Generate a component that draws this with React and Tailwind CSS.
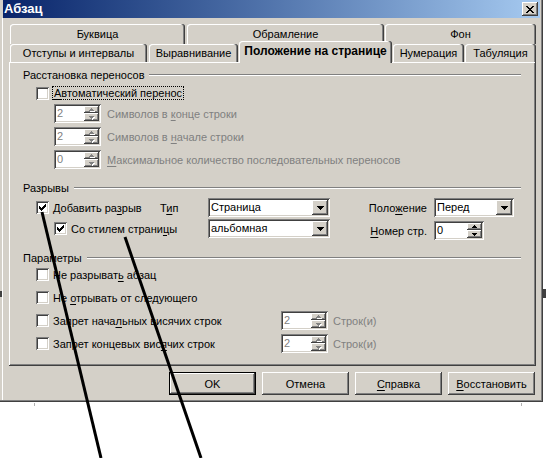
import React from "react";

const raised = "shadow-[inset_-1px_-1px_0_#404040,inset_1px_1px_0_#ffffff,inset_-2px_-2px_0_#808080]";
const sunken = "shadow-[inset_1px_1px_0_#808080,inset_-1px_-1px_0_#ffffff,inset_2px_2px_0_#404040,inset_-2px_-2px_0_#d4d0c8]";
const tabSh = "shadow-[inset_-1px_0_0_#404040,inset_-2px_0_0_#808080,inset_1px_1px_0_#ffffff]";

function U({ children }) {
  return <span className="underline underline-offset-[2px] decoration-1">{children}</span>;
}

function Pixels({ rows, color, w, h, className = "" }) {
  return (
    <svg width={w} height={h} shapeRendering="crispEdges" className={className}>
      {rows.map(([y, x, ww], i) => (
        <rect key={i} x={x} y={y} width={ww} height={1} fill={color} />
      ))}
    </svg>
  );
}

const checkRows = [
  [3, 9, 1],
  [4, 8, 2],
  [5, 3, 1], [5, 7, 3],
  [6, 3, 2], [6, 6, 3],
  [7, 3, 5],
  [8, 4, 3],
  [9, 5, 1],
];

function Check({ checked }) {
  return (
    <span className={`relative inline-block w-[13px] h-[13px] shrink-0 bg-white ${sunken}`}>
      {checked && <Pixels rows={checkRows} color="#000" w={13} h={13} className="absolute left-0 top-0" />}
    </span>
  );
}

const upRows = [[0, 2, 1], [1, 1, 3], [2, 0, 5]];
const downRows = [[0, 0, 5], [1, 1, 3], [2, 2, 1]];

function SpinBtn({ rows, disabled, h }) {
  return (
    <span className={`flex items-center justify-center bg-[#d4d0c8] ${raised} ${h}`}>
      <span className="relative w-[5px] h-[3px]">
        {disabled && <Pixels rows={rows} color="#ffffff" w={5} h={3} className="absolute left-[1px] top-[1px]" />}
        <Pixels rows={rows} color={disabled ? "#808080" : "#000000"} w={5} h={3} className="absolute left-0 top-0" />
      </span>
    </span>
  );
}

function Spin({ value, disabled, w }) {
  return (
    <div className={`flex h-[19px] shrink-0 bg-white p-[2px] ${sunken} ${w}`}>
      <span className={`flex-1 pl-[1px] leading-[15px] ${disabled ? "text-[#808080]" : "text-black"}`}>{value}</span>
      <span className="flex flex-col w-[15px]">
        <SpinBtn rows={upRows} disabled={disabled} h="h-[7px]" />
        <SpinBtn rows={downRows} disabled={disabled} h="h-[8px]" />
      </span>
    </div>
  );
}

const arrowRows = [[0, 0, 7], [1, 1, 5], [2, 2, 3], [3, 3, 1]];

function Combo({ value, w }) {
  return (
    <div className={`flex h-[19px] shrink-0 bg-white p-[2px] ${sunken} ${w}`}>
      <span className="flex-1 pl-[1px] leading-[15px] text-black">{value}</span>
      <span className={`flex items-center justify-center w-[16px] h-[15px] bg-[#d4d0c8] ${raised}`}>
        <Pixels rows={arrowRows} color="#000" w={7} h={4} />
      </span>
    </div>
  );
}

function Group({ label, className = "" }) {
  return (
    <div className={`flex items-center h-[14px] ${className}`}>
      <span className="whitespace-nowrap">{label}</span>
      <div className="flex-1 ml-[5px] h-[2px] border-t border-b border-t-[#808080] border-b-white" />
    </div>
  );
}

function Tab({ children, w, selected }) {
  return (
    <div
      className={`flex items-center justify-center rounded-t-[3px] bg-[#d4d0c8] whitespace-nowrap ${tabSh} ${w} ${
        selected ? "h-[22px] mb-[-1px] relative z-10 font-bold text-[12px] pb-[2px]" : "h-full"
      }`}
    >
      {children}
    </div>
  );
}

function Button({ children, def }) {
  return (
    <div
      className={`flex items-center justify-center w-[87px] h-[23px] bg-[#d4d0c8] ${
        def
          ? "shadow-[inset_0_0_0_1px_#000000,inset_-2px_-2px_0_#404040,inset_2px_2px_0_#ffffff,inset_-3px_-3px_0_#808080]"
          : raised
      }`}
    >
      {children}
    </div>
  );
}

const closeRows = [
  [0, 0, 2], [0, 6, 2],
  [1, 1, 2], [1, 5, 2],
  [2, 2, 4],
  [3, 3, 2],
  [4, 2, 4],
  [5, 1, 2], [5, 5, 2],
  [6, 0, 2], [6, 6, 2],
];

export default function App() {
  return (
    <div className="relative w-[546px] h-[458px] bg-white overflow-hidden text-[11px] leading-[14px] text-black whitespace-nowrap font-['Liberation_Sans',Arial,sans-serif]">
      {/* dialog window */}
      <div className="w-[543px] h-[402px] bg-[#d4d0c8] border-r border-b border-[#404040]">
        <div className="h-full border-r border-b border-[#808080] flex flex-col">
          {/* title bar */}
          <div className="ml-[3px] w-[537px] h-[18px] shrink-0 flex items-center justify-between pl-[1px] pr-[2px] bg-linear-to-r from-[#0a246a] to-[#a6caf0]">
            <span className="text-white font-bold text-[13px] leading-[16px]">Абзац</span>
            <span className={`flex items-center justify-center w-[16px] h-[14px] bg-[#d4d0c8] ${raised}`}>
              <Pixels rows={closeRows} color="#000" w={8} h={7} />
            </span>
          </div>

          <div className="flex-1 ml-[2px] border-l border-white pl-[6px] flex flex-col">
            {/* tab rows */}
            <div className="mt-[6px] h-[20px] pl-[1px] flex">
              <Tab w="w-[175px]">Буквица</Tab>
              <div className="w-[2px]" />
              <Tab w="w-[197px]">Обрамление</Tab>
              <div className="w-[1px]" />
              <Tab w="w-[151px]">Фон</Tab>
            </div>
            <div className="h-[18px] pl-[1px] flex items-end">
              <Tab w="w-[137px]">Отступы и интервалы</Tab>
              <div className="w-[2px]" />
              <Tab w="w-[89px]">Выравнивание</Tab>
              <div className="w-[1px]" />
              <Tab w="w-[153px]" selected>
                Положение на странице
              </Tab>
              <div className="w-[1px]" />
              <Tab w="w-[71px]">Нумерация</Tab>
              <div className="w-[1px]" />
              <Tab w="w-[71px]">Табуляция</Tab>
            </div>

            {/* panel */}
            <div className={`w-[527px] h-[304px] shrink-0 bg-[#d4d0c8] ${raised} pl-[14px] pr-[15px] pt-[6px] flex flex-col`}>
              <Group label="Расстановка переносов" />
              <div className="pl-[13px] flex flex-col">
                <div className="mt-[4px] h-[14px] flex items-center gap-[3px]">
                  <Check />
                  <span className="border border-dotted border-black px-[1px] leading-[12px]">
                    <U>А</U>втоматический перенос
                  </span>
                </div>
                <div className="mt-[4px] pl-[18px] flex items-center gap-[6px] text-[#808080]">
                  <Spin value="2" disabled w="w-[47px]" />
                  <span>
                    Символов в <U>к</U>онце строки
                  </span>
                </div>
                <div className="mt-[4px] pl-[18px] flex items-center gap-[6px] text-[#808080]">
                  <Spin value="2" disabled w="w-[47px]" />
                  <span>
                    Символов в <U>н</U>ачале строки
                  </span>
                </div>
                <div className="mt-[4px] pl-[18px] flex items-center gap-[6px] text-[#808080]">
                  <Spin value="0" disabled w="w-[47px]" />
                  <span>
                    <U>М</U>аксимальное количество последовательных переносов
                  </span>
                </div>
              </div>

              <Group label="Разрывы" className="mt-[12px]" />
              <div className="pl-[13px] flex flex-col">
                <div className="mt-[3px] h-[19px] flex items-center">
                  <div className="w-[124px] flex items-center gap-[4px]">
                    <Check checked />
                    <span>
                      Добавить ра<U>з</U>рыв
                    </span>
                  </div>
                  <span className="w-[48px]">
                    Т<U>и</U>п
                  </span>
                  <Combo value="Страница" w="w-[122px]" />
                  <span className="w-[104px] text-right pr-[7px]">
                    Поло<U>ж</U>ение
                  </span>
                  <Combo value="Перед" w="w-[80px]" />
                </div>
                <div className="mt-[2px] h-[21px] flex items-start">
                  <div className="w-[124px] h-[19px] pl-[18px] flex items-center gap-[4px]">
                    <Check checked />
                    <span>
                      Со стилем страни<U>ц</U>ы
                    </span>
                  </div>
                  <span className="w-[48px]" />
                  <Combo value="альбомная" w="w-[122px]" />
                  <span className="w-[104px] mt-[2px] h-[19px] flex items-center justify-end pr-[7px]">
                    <span>
                      <U>Н</U>омер стр.
                    </span>
                  </span>
                  <div className="mt-[2px]">
                    <Spin value="0" w="w-[50px]" />
                  </div>
                </div>
              </div>

              <Group label="Параметры" className="mt-[11px]" />
              <div className="pl-[13px] flex flex-col gap-[4px]">
                <div className="h-[19px] flex items-center gap-[4px]">
                  <Check />
                  <span>
                    Не разрыват<U>ь</U> абзац
                  </span>
                </div>
                <div className="h-[19px] flex items-center gap-[4px]">
                  <Check />
                  <span>
                    Не <U>о</U>трывать от следующего
                  </span>
                </div>
                <div className="h-[19px] flex items-center">
                  <div className="w-[245px] flex items-center gap-[4px]">
                    <Check />
                    <span>
                      Запрет нача<U>л</U>ьных висячих строк
                    </span>
                  </div>
                  <Spin value="2" disabled w="w-[47px]" />
                  <span className="ml-[5px] text-[#808080]">Строк(и)</span>
                </div>
                <div className="h-[19px] flex items-center">
                  <div className="w-[245px] flex items-center gap-[4px]">
                    <Check />
                    <span>
                      Запрет концевых вис<U>я</U>чих строк
                    </span>
                  </div>
                  <Spin value="2" disabled w="w-[47px]" />
                  <span className="ml-[5px] text-[#808080]">Строк(и)</span>
                </div>
              </div>
            </div>

            {/* buttons */}
            <div className="mt-[6px] w-[527px] flex justify-end gap-[6px] pr-[1px]">
              <Button def>OK</Button>
              <Button>Отмена</Button>
              <Button>
                <U>С</U>правка
              </Button>
              <Button>
                <U>В</U>осстановить
              </Button>
            </div>
          </div>
        </div>
      </div>

      {/* stray marks of the page behind */}
      <div className="absolute left-0 top-[291px] w-[2px] h-[6px] bg-[#404040]" />
      <div className="absolute left-[543px] top-[289px] w-[3px] h-[9px] bg-[#404040]" />
      <div className="absolute left-[34px] top-[403px] w-[1px] h-[3px] bg-[#b0b0b0]" />
      <div className="absolute left-[521px] top-[403px] w-[1px] h-[3px] bg-[#b0b0b0]" />

      {/* annotation arrows */}
      <svg className="absolute left-0 top-0 pointer-events-none" width="546" height="458">
        <line x1="42" y1="212" x2="101" y2="458" stroke="#000" strokeWidth="3" />
        <line x1="125" y1="237" x2="201" y2="458" stroke="#000" strokeWidth="3" />
      </svg>
    </div>
  );
}
